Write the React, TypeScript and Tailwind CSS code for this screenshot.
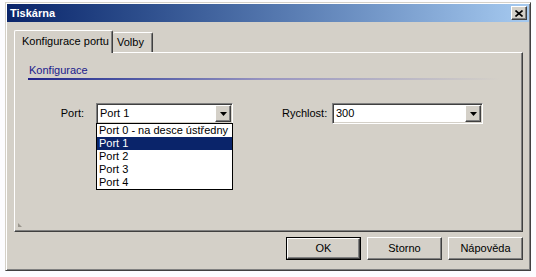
import React from 'react';

const PORTS = ['Port 0 - na desce ústředny', 'Port 1', 'Port 2', 'Port 3', 'Port 4'];

const raised =
  'border border-t-white border-l-white border-r-[#404040] border-b-[#404040] shadow-[inset_-1px_-1px_0_#808080]';

const DropArrow: React.FC = () => (
  <div className={`flex h-[17px] w-[16px] items-center justify-center bg-[#d4d0c8] ${raised}`}>
    <svg width="7" height="4" viewBox="0 0 7 4">
      <path d="M0 0h7L3.5 4z" fill="#000" />
    </svg>
  </div>
);

const Combo: React.FC<{ value: string; width: string; children?: React.ReactNode }> = ({ value, width, children }) => (
  <div
    className={`relative flex h-[21px] ${width} items-center border border-t-[#808080] border-l-[#808080] border-r-white border-b-white bg-white shadow-[inset_1px_1px_0_#404040,inset_-1px_-1px_0_#d4d0c8] p-[1px]`}
  >
    <span className="flex-1 pl-[2px] leading-[13px]">{value}</span>
    <DropArrow />
    {children}
  </div>
);

const Button: React.FC<{ label: string; isDefault?: boolean }> = ({ label, isDefault }) =>
  isDefault ? (
    <div className="h-[23px] w-[75px] border border-black">
      <div className={`flex h-full w-full items-center justify-center bg-[#d4d0c8] ${raised}`}>{label}</div>
    </div>
  ) : (
    <div className={`flex h-[23px] w-[75px] items-center justify-center bg-[#d4d0c8] ${raised}`}>{label}</div>
  );

export default function App() {
  return (
    <div className="h-[277px] w-[536px] overflow-hidden bg-[#fcfcff] pt-[2px] pl-[5px] font-['Liberation_Sans',Arial,sans-serif] text-[11px] text-black">
      {/* Window */}
      <div className="flex h-[269px] w-[526px] flex-col border border-t-[#d4d0c8] border-l-[#d4d0c8] border-r-[#404040] border-b-[#404040] bg-[#d4d0c8] p-[1px] shadow-[inset_1px_1px_0_#fff,inset_-1px_-1px_0_#808080]">
        {/* Title bar */}
        <div className="flex h-[18px] items-center bg-gradient-to-r from-[#0a246a] to-[#a6caf0] pl-[3px] pr-[2px]">
          <span className="flex-1 font-bold leading-[13px] text-white">Tiskárna</span>
          <div className={`flex h-[14px] w-[16px] items-center justify-center bg-[#d4d0c8] ${raised}`}>
            <svg width="8" height="7" viewBox="0 0 8 7">
              <path d="M0.5 0.5L7.5 6.5M7.5 0.5L0.5 6.5" stroke="#000" strokeWidth="1.6" />
            </svg>
          </div>
        </div>

        {/* Tabs */}
        <div className="mt-[8px] ml-[7px] mr-[6px] flex flex-col">
          <div className="flex h-[22px] items-end">
            <div className="relative z-10 mb-[-1px] h-[23px] w-[99px] rounded-t-[2px] border border-b-0 border-t-white border-l-white border-r-[#404040] bg-[#d4d0c8] pt-[4px] pl-[7px] leading-[13px] shadow-[inset_-1px_0_0_#808080]">
              Konfigurace portu
            </div>
            <div className="h-[20px] w-[40px] rounded-t-[2px] border border-b-0 border-l-0 border-t-white border-r-[#404040] bg-[#d4d0c8] pt-[3px] pl-[4px] leading-[13px] shadow-[inset_-1px_0_0_#808080]">
              Volby
            </div>
          </div>

          {/* Tab panel */}
          <div className="relative flex h-[180px] flex-col border border-t-white border-l-white border-r-[#404040] border-b-[#404040] px-[14px] shadow-[inset_-1px_-1px_0_#808080]">
            <div className="mt-[11px] leading-[13px] text-[#1a1a8c]">Konfigurace</div>
            <div className="mt-[1px] ml-[-1px] h-[2px] w-[472px] bg-gradient-to-r from-[#20208a] via-[#9894c0] to-[#d4d0c8]" />

            <div className="mt-[23px] flex h-[21px] items-center">
              <span className="w-[55px] text-right leading-[13px]">Port:</span>
              <div className="ml-[12px]">
                <Combo value="Port 1" width="w-[137px]">
                  <div className="absolute left-[-1px] top-full z-20 w-[137px] border border-black bg-white">
                    {PORTS.map((p, i) => (
                      <div
                        key={p}
                        className={`h-[13px] whitespace-nowrap pl-[2px] leading-[13px] ${
                          i === 1 ? 'bg-[#0a246a] text-white' : ''
                        }`}
                      >
                        {p}
                      </div>
                    ))}
                  </div>
                </Combo>
              </div>
              <span className="ml-[49px] w-[50px] leading-[13px]">Rychlost:</span>
              <Combo value="300" width="w-[151px]" />
            </div>

            <svg className="absolute bottom-[4px] left-[3px]" width="4" height="4" viewBox="0 0 4 4">
              <path d="M0 0L4 4H0z" fill="#9a968e" />
            </svg>
          </div>

          {/* Buttons */}
          <div className="mt-[5px] flex justify-end gap-[6px]">
            <Button label="OK" isDefault />
            <Button label="Storno" />
            <Button label="Nápověda" />
          </div>
        </div>
      </div>
    </div>
  );
}
